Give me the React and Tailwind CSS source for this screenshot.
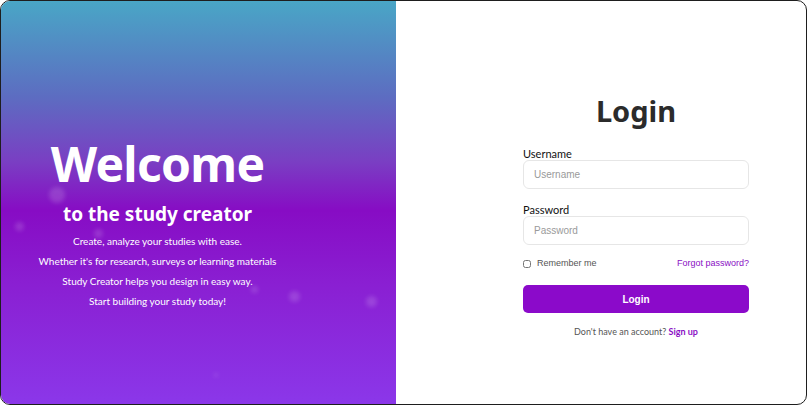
import React from "react";

const spots = [
  { l: 48, t: 186, s: 16 },
  { l: 14, t: 221, s: 9 },
  { l: 93, t: 228, s: 9 },
  { l: 288, t: 290, s: 11 },
  { l: 365, t: 295, s: 11 },
  { l: 250, t: 285, s: 7 },
  { l: 213, t: 372, s: 4 },
];

export default function App() {
  return (
    <div className="w-[807px] h-[405px] bg-white">
      <div className="w-full h-full flex border border-[#1e1e1e] rounded-[10px] overflow-hidden">
        {/* left welcome panel */}
        <div className="relative w-[395px] shrink-0 h-full bg-[linear-gradient(180deg,#49a6c6_0%,#5d6cc1_24%,#7a3ec3_40%,#870cc4_52%,#8a1fd2_70%,#8b37e9_100%)] flex flex-col items-center pt-[139px] pr-[82px] text-white font-['Noto_Sans',sans-serif]">
          {spots.map((p, i) => (
            <div
              key={i}
              className="absolute rounded-full bg-white/15 blur-[2px]"
              style={{ left: p.l, top: p.t, width: p.s, height: p.s }}
            />
          ))}
          <h1 className="relative text-[48px] leading-none font-bold tracking-[-0.7px]">Welcome</h1>
          <h2 className="relative text-[19px] font-bold leading-none mt-[17px]">to the study creator</h2>
          <div className="relative mt-[7px] text-[10px] leading-[20px] text-center font-['Lato',sans-serif]">
            <p>Create, analyze your studies with ease.</p>
            <p>Whether it's for research, surveys or learning materials</p>
            <p>Study Creator helps you design in easy way.</p>
            <p>Start building your study today!</p>
          </div>
        </div>

        {/* right login panel */}
        <div className="flex-1 h-full flex flex-col items-center pl-[70px] pt-[95px]">
          <h1 className="text-[29px] leading-none font-bold text-[#2b2b2b] font-['Noto_Sans',sans-serif]">Login</h1>
          <form className="w-[226px] mt-[22px] font-['Liberation_Sans',Arial,sans-serif]">
            <label className="block text-[11px] leading-[13px] text-[#111] font-['Lato',sans-serif]">Username</label>
            <input
              placeholder="Username"
              className="w-full h-[29px] px-[10px] rounded-[6px] border border-[#e6e6e6] text-[10px] placeholder:text-[#9a9a9a] outline-none"
            />
            <label className="block mt-[14px] text-[11px] leading-[13px] text-[#111] font-['Lato',sans-serif]">Password</label>
            <input
              type="password"
              placeholder="Password"
              className="w-full h-[29px] px-[10px] rounded-[6px] border border-[#e6e6e6] text-[10px] placeholder:text-[#9a9a9a] outline-none"
            />
            <div className="mt-[11px] h-[15px] flex items-center justify-between text-[9px]">
              <label className="flex items-center gap-[6px] text-[#555]">
                <input type="checkbox" className="w-[8px] h-[8px] m-0" />
                Remember me
              </label>
              <a className="text-[#8a0fc4]">Forgot password?</a>
            </div>
            <button
              type="button"
              className="mt-[14px] w-full h-[28px] rounded-[5px] bg-[#8b0aca] text-white text-[10px] font-bold"
            >
              Login
            </button>
            <p className="mt-[11px] text-center text-[9px] leading-[15px] text-[#555] font-['Lato',sans-serif]">
              Don't have an account? <a className="font-bold text-[#8a0fc4]">Sign up</a>
            </p>
          </form>
        </div>
      </div>
    </div>
  );
}
